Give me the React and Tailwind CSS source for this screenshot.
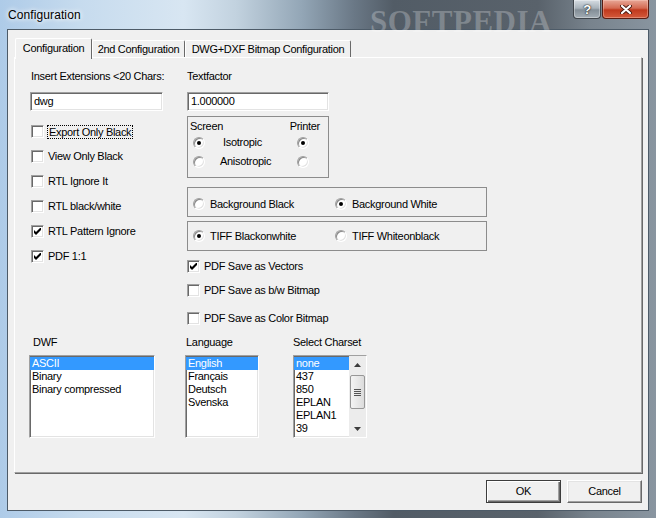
const SUNKEN =
  'border border-t-[#a0a0a0] border-l-[#a0a0a0] border-b-white border-r-white shadow-[inset_1px_1px_0_#696969,inset_-1px_-1px_0_#e3e3e3]'

const RAISED =
  'border border-t-white border-l-white border-b-[#696969] border-r-[#696969] shadow-[inset_-1px_-1px_0_#a0a0a0,inset_1px_1px_0_#e3e3e3]'

function CheckBox({ checked }) {
  return (
    <span className={`relative flex h-[13px] w-[13px] shrink-0 bg-white ${SUNKEN}`}>
      {checked && (
        <svg viewBox="0 0 7 7" className="absolute left-[2px] top-[2px] h-[7px] w-[7px]">
          <polygon points="0,2 2,4 7,-1 7,2 2,7 0,5" fill="#000" />
        </svg>
      )}
    </span>
  )
}

function Radio({ checked }) {
  return (
    <span className="flex h-[12px] w-[12px] shrink-0 items-center justify-center rounded-full border border-t-[#a0a0a0] border-l-[#a0a0a0] border-b-white border-r-white bg-white shadow-[inset_1px_1px_0_#8a8a8a,inset_-1px_-1px_0_#e3e3e3]">
      {checked && <span className="h-[4px] w-[4px] rounded-full bg-black" />}
    </span>
  )
}

function CheckRow({ label, checked, focus, className = '' }) {
  return (
    <div className={`flex items-center ${className}`}>
      <CheckBox checked={checked} />
      <span
        className={
          focus
            ? 'ml-[3px] border border-dotted border-black px-px leading-[12px]'
            : 'ml-[4px] leading-[13px]'
        }
      >
        {label}
      </span>
    </div>
  )
}

function ListBox({ items, width, scroll }) {
  return (
    <div className={`flex h-[83px] bg-white ${SUNKEN} ${width}`}>
      <div className="flex-1 pt-px">
        {items.map((item, i) => (
          <div
            key={item}
            className={`h-[13px] pl-[2px] leading-[13px] ${i === 0 ? 'bg-[#3399ff] text-white' : ''}`}
          >
            {item}
          </div>
        ))}
      </div>
      {scroll && (
        <div className="flex w-[17px] flex-col bg-[#ececec]">
          <div className="flex h-[17px] items-center justify-center">
            <svg viewBox="0 0 7 4" className="h-[4px] w-[7px]">
              <polygon points="3.5,0 7,4 0,4" fill="#3c3c3c" />
            </svg>
          </div>
          <div className="mx-px mt-[2px] flex h-[34px] flex-col items-center justify-center gap-px rounded-[2px] border border-[#979797] bg-[linear-gradient(90deg,#f4f4f4,#dcdcdc)]">
            <span className="h-px w-[7px] bg-[#555]" />
            <span className="h-px w-[7px] bg-[#555]" />
            <span className="h-px w-[7px] bg-[#555]" />
            <span className="h-px w-[7px] bg-[#555]" />
          </div>
          <div className="flex-1" />
          <div className="flex h-[17px] items-center justify-center">
            <svg viewBox="0 0 7 4" className="h-[4px] w-[7px]">
              <polygon points="0,0 7,0 3.5,4" fill="#3c3c3c" />
            </svg>
          </div>
        </div>
      )}
    </div>
  )
}

export default function App() {
  return (
    <div className="relative h-[518px] w-[656px] overflow-hidden bg-[linear-gradient(90deg,#aecbe8_0%,#c6dbee_12%,#d8e6f2_28%,#c2d2df_36%,#93a6b6_46%,#6a7886_54%,#525c66_60%,#59626b_82%,#78838d_90%,#8995a0_100%)] font-['Liberation_Sans',Arial,sans-serif] text-[11px] tracking-[-0.3px] text-black">
      {/* Title bar */}
      <div className="relative flex h-[29px] items-center pl-[8px]">
        <span className="text-[12px] tracking-[0.1px] [text-shadow:0_0_6px_#fff,0_0_4px_#fff]">
          Configuration
        </span>
        <span className="absolute left-[370px] top-[-1px] font-['Liberation_Serif',serif] text-[31px] font-bold tracking-[0.5px] text-white/25">
          SOFTPEDIA
        </span>
        <div className="absolute right-[7px] top-0 flex gap-px">
          <div className="flex h-[19px] w-[28px] items-center justify-center rounded-b-[4px] border border-t-0 border-[#40464c] bg-[linear-gradient(180deg,#d6dde3_0%,#a9b3bb_45%,#838e97_55%,#a3adb5_100%)] shadow-[inset_0_0_0_1px_rgba(255,255,255,0.35)]">
            <span className="text-[13px] font-bold leading-none text-white [text-shadow:0_0_2px_#222,0_0_1px_#000]">
              ?
            </span>
          </div>
          <div className="flex h-[19px] w-[47px] items-center justify-center rounded-b-[4px] border border-t-0 border-[#5a1d12] bg-[linear-gradient(180deg,#e8a797_0%,#d46a52_45%,#c0391d_55%,#d45a3b_100%)] shadow-[inset_0_0_0_1px_rgba(255,220,210,0.35)]">
            <svg viewBox="0 0 12 9" className="h-[9px] w-[12px]">
              <path d="M2 1 L10 8 M10 1 L2 8" stroke="#4a1a10" strokeWidth="4" strokeLinecap="round" />
              <path d="M2 1 L10 8 M10 1 L2 8" stroke="#fff" strokeWidth="2.2" strokeLinecap="round" />
            </svg>
          </div>
        </div>
      </div>

      {/* Client area */}
      <div className="ml-[7px] h-[482px] w-[642px] border border-[#4d5b68] bg-[#f0f0f0] pl-[6px] pt-[8px]">
        {/* Tabs */}
        <div className="flex h-[19px] items-end pl-px">
          <div className="relative z-10 -mb-[2px] flex h-[21px] w-[77px] items-center justify-center rounded-t-[2px] border border-b-0 border-t-white border-l-white border-r-[#696969] bg-[#f0f0f0] pb-[2px]">
            Configuration
          </div>
          <div className="flex h-[17px] w-[93px] items-center justify-center rounded-t-[2px] border border-b-0 border-t-white border-l-white border-r-[#696969] bg-[#f0f0f0]">
            2nd Configuration
          </div>
          <div className="flex h-[17px] w-[166px] items-center justify-center rounded-t-[2px] border border-b-0 border-t-white border-l-white border-r-[#696969] bg-[#f0f0f0]">
            DWG+DXF Bitmap Configuration
          </div>
        </div>

        {/* Tab panel */}
        <div className="h-[416px] w-[628px] border border-t-white border-l-white border-b-[#a0a0a0] border-r-[#a0a0a0] pl-[15px] pt-[12px] shadow-[1px_1px_0_#696969]">
          <div className="flex items-start">
            {/* Left column */}
            <div className="flex w-[157px] flex-col">
              <div className="ml-px h-[13px] leading-[13px]">Insert Extensions &lt;20 Chars:</div>
              <div className={`mt-[9px] flex h-[19px] w-[133px] items-center bg-white pl-[3px] ${SUNKEN}`}>
                dwg
              </div>
              <div className="mt-[8px] ml-px flex flex-col">
                <CheckRow label="Export Only Black" focus className="h-[25px]" />
                <CheckRow label="View Only Black" className="h-[25px]" />
                <CheckRow label="RTL Ignore It" className="h-[25px]" />
                <CheckRow label="RTL black/white" className="h-[25px]" />
                <CheckRow label="RTL Pattern Ignore" checked className="h-[25px]" />
                <CheckRow label="PDF 1:1" checked className="h-[25px]" />
              </div>
            </div>

            {/* Right column */}
            <div className="flex w-[300px] flex-col">
              <div className="h-[13px] leading-[13px]">Textfactor</div>
              <div className={`mt-[9px] flex h-[19px] w-[142px] items-center bg-white pl-[3px] ${SUNKEN}`}>
                1.000000
              </div>

              <div className="mt-[5px] h-[62px] w-[142px] border border-[#8c8c8c] pt-[3px]">
                <div className="flex h-[13px] justify-between pl-[2px] pr-[8px] leading-[13px]">
                  <span>Screen</span>
                  <span>Printer</span>
                </div>
                <div className="flex h-[19px] items-center pl-[5px]">
                  <Radio checked />
                  <span className="ml-[18px]">Isotropic</span>
                  <span className="ml-auto mr-[19px]">
                    <Radio checked />
                  </span>
                </div>
                <div className="flex h-[19px] items-center pl-[5px]">
                  <Radio />
                  <span className="ml-[15px]">Anisotropic</span>
                  <span className="ml-auto mr-[19px]">
                    <Radio />
                  </span>
                </div>
              </div>

              <div className="mt-[9px] flex h-[30px] w-[300px] items-center border border-[#8c8c8c] pl-[5px] pt-[4px]">
                <div className="flex w-[142px] items-center">
                  <Radio />
                  <span className="ml-[5px]">Background Black</span>
                </div>
                <div className="flex items-center">
                  <Radio checked />
                  <span className="ml-[5px]">Background White</span>
                </div>
              </div>

              <div className="mt-[4px] flex h-[30px] w-[300px] items-center border border-[#8c8c8c] pl-[5px]">
                <div className="flex w-[142px] items-center">
                  <Radio checked />
                  <span className="ml-[5px]">TIFF Blackonwhite</span>
                </div>
                <div className="flex items-center">
                  <Radio />
                  <span className="ml-[5px]">TIFF Whiteonblack</span>
                </div>
              </div>

              <CheckRow label="PDF Save as Vectors" checked className="mt-[3px] h-[24px]" />
              <CheckRow label="PDF Save as b/w Bitmap" className="h-[24px]" />
              <CheckRow label="PDF Save as Color Bitmap" className="mt-[4px] h-[24px]" />
            </div>
          </div>

          {/* List boxes */}
          <div className="-ml-px mt-[6px] flex">
            <div className="w-[156px]">
              <div className="ml-[4px] h-[13px] leading-[13px]">DWF</div>
              <div className="mt-[6px]">
                <ListBox items={['ASCII', 'Binary', 'Binary compressed']} width="w-[126px]" />
              </div>
            </div>
            <div className="w-[108px]">
              <div className="ml-px h-[13px] leading-[13px]">Language</div>
              <div className="mt-[6px]">
                <ListBox items={['English', 'Français', 'Deutsch', 'Svenska']} width="w-[74px]" />
              </div>
            </div>
            <div>
              <div className="h-[13px] leading-[13px]">Select Charset</div>
              <div className="mt-[6px]">
                <ListBox items={['none', '437', '850', 'EPLAN', 'EPLAN1', '39']} width="w-[74px]" scroll />
              </div>
            </div>
          </div>
        </div>

        {/* Buttons */}
        <div className="mt-[7px] flex w-[628px] justify-end gap-[6px]">
          <div className="flex h-[23px] w-[75px] items-center justify-center border border-[#3c3c3c] bg-[#f0f0f0] shadow-[inset_1px_1px_0_#fff,inset_-1px_-1px_0_#696969,inset_-2px_-2px_0_#a0a0a0]">
            OK
          </div>
          <div className={`flex h-[23px] w-[75px] items-center justify-center bg-[#f0f0f0] ${RAISED}`}>
            Cancel
          </div>
        </div>
      </div>
    </div>
  )
}
